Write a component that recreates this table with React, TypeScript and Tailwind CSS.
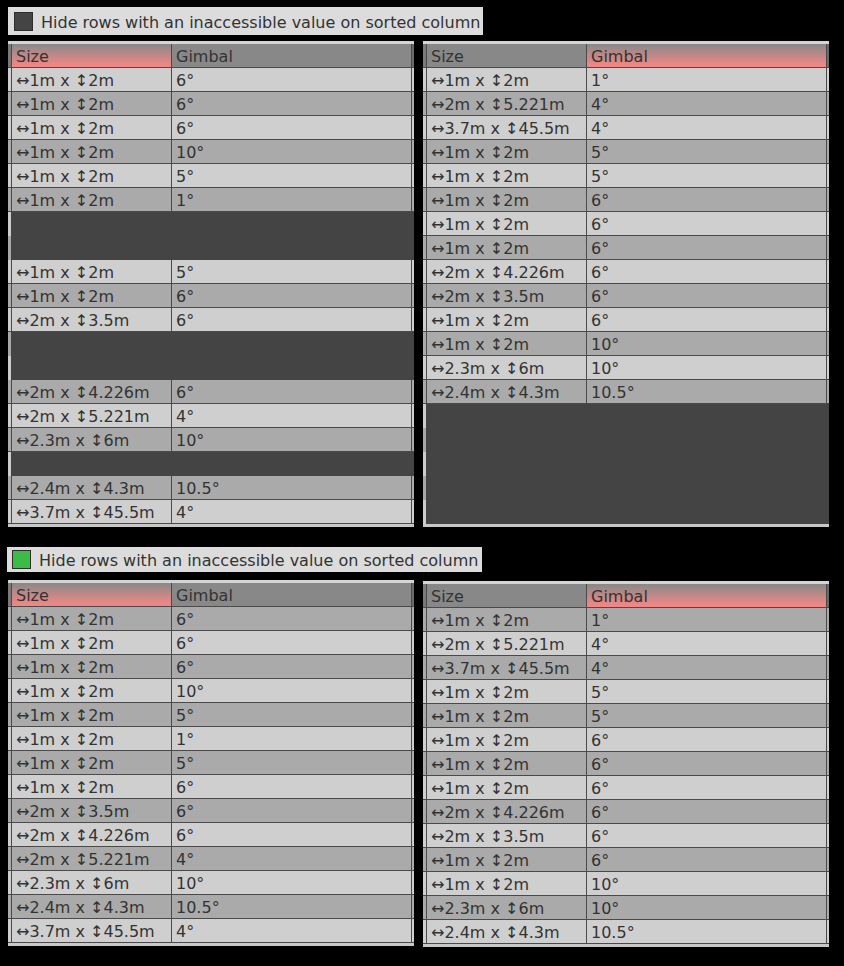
import React from 'react';

type Row = { size?: string; gimbal?: string; hidden?: boolean };

const r = (size: string, gimbal: string): Row => ({ size, gimbal });
const H: Row = { hidden: true };

// arrows are part of the text in the game UI
const sz = (w: string, h: string) => `↔${w}m x ↕${h}m`;

const topLeft: Row[] = [
  r(sz('1', '2'), '6°'),
  r(sz('1', '2'), '6°'),
  r(sz('1', '2'), '6°'),
  r(sz('1', '2'), '10°'),
  r(sz('1', '2'), '5°'),
  r(sz('1', '2'), '1°'),
  H,
  H,
  r(sz('1', '2'), '5°'),
  r(sz('1', '2'), '6°'),
  r(sz('2', '3.5'), '6°'),
  H,
  H,
  r(sz('2', '4.226'), '6°'),
  r(sz('2', '5.221'), '4°'),
  r(sz('2.3', '6'), '10°'),
  H,
  r(sz('2.4', '4.3'), '10.5°'),
  r(sz('3.7', '45.5'), '4°'),
];

const byGimbal: Row[] = [
  r(sz('1', '2'), '1°'),
  r(sz('2', '5.221'), '4°'),
  r(sz('3.7', '45.5'), '4°'),
  r(sz('1', '2'), '5°'),
  r(sz('1', '2'), '5°'),
  r(sz('1', '2'), '6°'),
  r(sz('1', '2'), '6°'),
  r(sz('1', '2'), '6°'),
  r(sz('2', '4.226'), '6°'),
  r(sz('2', '3.5'), '6°'),
  r(sz('1', '2'), '6°'),
  r(sz('1', '2'), '10°'),
  r(sz('2.3', '6'), '10°'),
  r(sz('2.4', '4.3'), '10.5°'),
];

const topRight: Row[] = [...byGimbal, H, H, H, H, H];

const bottomLeft: Row[] = [
  r(sz('1', '2'), '6°'),
  r(sz('1', '2'), '6°'),
  r(sz('1', '2'), '6°'),
  r(sz('1', '2'), '10°'),
  r(sz('1', '2'), '5°'),
  r(sz('1', '2'), '1°'),
  r(sz('1', '2'), '5°'),
  r(sz('1', '2'), '6°'),
  r(sz('2', '3.5'), '6°'),
  r(sz('2', '4.226'), '6°'),
  r(sz('2', '5.221'), '4°'),
  r(sz('2.3', '6'), '10°'),
  r(sz('2.4', '4.3'), '10.5°'),
  r(sz('3.7', '45.5'), '4°'),
];

const sortedHead = 'bg-gradient-to-b from-[#888888] to-[#f78585]';
const cell = 'border-l border-[#4a4a4a] pl-[4px] pt-[3px] flex items-center whitespace-nowrap';

function Table({ rows, sortBy, darkFirst, className }: { rows: Row[]; sortBy: 'size' | 'gimbal'; darkFirst?: boolean; className?: string }) {
  return (
    <div className={`w-[406px] flex flex-col ${className ?? ''}`}>
      <div className="h-[3px] bg-[#d4d4d4]" />
      <div className="flex h-[24px] border-b border-[#4a4a4a] bg-[#888888]">
        <div className="w-[3px] bg-[#7a7a7a]" />
        <div className={`w-[160px] ${cell} ${sortBy === 'size' ? sortedHead : ''}`}>Size</div>
        <div className={`w-[240px] ${cell} ${sortBy === 'gimbal' ? sortedHead : ''}`}>Gimbal</div>
        <div className="w-[3px] border-l border-[#4a4a4a] bg-[#6a6a6a]" />
      </div>
      {rows.map((row, i) => {
        if (row.hidden) {
          return (
            <div key={i} className="flex h-[24px]">
              <div className={`w-[3px] ${i % 2 ? 'bg-[#a8a8a8]' : 'bg-[#cccccc]'}`} />
              <div className="flex-1 bg-[#444444]" />
            </div>
          );
        }
        const dark = darkFirst ? i % 2 === 0 : i % 2 === 1;
        const bg = dark ? 'bg-[#aaaaaa]' : 'bg-[#cfcfcf]';
        return (
          <div key={i} className={`flex h-[24px] border-b border-[#4a4a4a] ${bg}`}>
            <div className="w-[3px]" />
            <div className={`w-[160px] ${cell}`}>{row.size}</div>
            <div className={`w-[240px] ${cell}`}>{row.gimbal}</div>
            <div className="w-[3px] border-l border-[#4a4a4a]" />
          </div>
        );
      })}
      <div className="h-[3px] bg-[#c8c8c8]" />
    </div>
  );
}

function HideToggle({ on, className }: { on?: boolean; className?: string }) {
  return (
    <div className={`w-[475px] bg-[#dcdcdc] flex items-center ${className ?? ''}`}>
      <div className={`w-[19px] h-[19px] border border-[#2e2e2e] ${on ? 'bg-[#3dbb45]' : 'bg-[#444444]'}`} />
      <span className="ml-[8px] pt-[3px] whitespace-nowrap">Hide rows with an inaccessible value on sorted column</span>
    </div>
  );
}

export default function App() {
  return (
    <div
      className="w-[844px] h-[966px] bg-black text-[#333333] text-[16px] leading-none overflow-hidden"
      style={{ fontFamily: '"DejaVu Sans", Verdana, sans-serif' }}
    >
      <HideToggle className="ml-[8px] mt-[7px] h-[28px] pl-[6px]" />
      <div className="flex gap-[9px] ml-[8px] mt-[6px]">
        <Table rows={topLeft} sortBy="size" />
        <Table rows={topRight} sortBy="gimbal" />
      </div>
      <HideToggle on className="ml-[7px] mt-[20px] h-[25px] pl-[5px]" />
      <div className="flex items-start gap-[9px] ml-[8px] mt-[8px]">
        <Table rows={bottomLeft} sortBy="size" darkFirst />
        <Table rows={byGimbal} sortBy="gimbal" darkFirst className="mt-[1px]" />
      </div>
    </div>
  );
}
